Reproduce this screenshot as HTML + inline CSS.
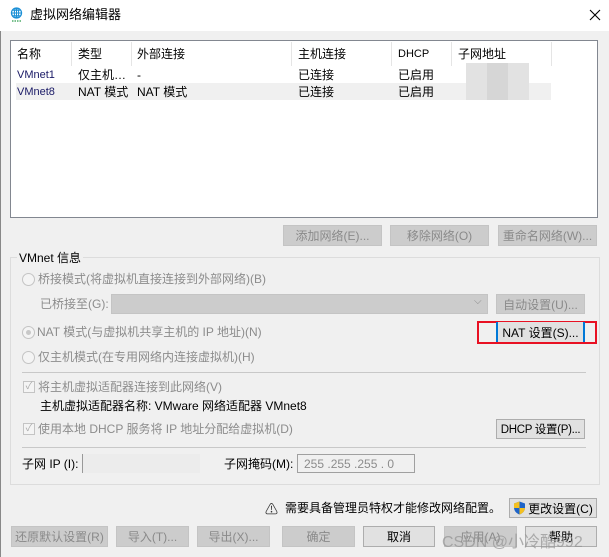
<!DOCTYPE html>
<html><head><meta charset="utf-8"><style>
*{margin:0;padding:0;box-sizing:border-box}
body{width:609px;height:557px;background:#f0f0f0;font-family:"Liberation Sans","Noto Sans CJK SC",sans-serif;font-size:12px;color:#000;position:relative;overflow:hidden}
.a{position:absolute;white-space:nowrap}
.t{line-height:14px}
.g{color:#8c8c8c}
.btn{position:absolute;background:#cccccc;border:1px solid #c4c4c4;color:#8a8a8a;text-align:center;font-size:12px;display:flex;align-items:center;justify-content:center;white-space:nowrap;overflow:hidden}
.en{background:#e1e1e1;border:1px solid #adadad;color:#000}
.sep{position:absolute;width:1px;background:#e5e5e5}
.rad{position:absolute;width:13px;height:13px;border:1px solid #c4c4c4;border-radius:50%;background:#f4f4f4}
.chk{position:absolute;width:12px;height:12px;border:1px solid #c4c4c4;background:#f4f4f4;color:#aaa;font-size:10px;line-height:10px;text-align:center}
</style></head><body>
<div class="a" style="left:0;top:0;width:609px;height:31px;background:#fff"></div>
<svg class="a" style="left:10px;top:7px" width="13" height="15" viewBox="0 0 13 15"><circle cx="6.5" cy="6" r="5" fill="none" stroke="#1a8fd6" stroke-width="1.3"/><path d="M1.5 6h10M6.5 1v10M3 3.3h7M3 8.7h7" stroke="#1a8fd6" stroke-width="1"/><ellipse cx="6.5" cy="6" rx="2.2" ry="5" fill="none" stroke="#1a8fd6"/><path d="M2 14h9" stroke="#2a9a4a" stroke-width="1.3" stroke-dasharray="1.5 1"/></svg>
<div class="a t" style="left:30px;top:8px;font-size:13px">虚拟网络编辑器</div>
<svg class="a" style="left:589px;top:9px" width="12" height="12" viewBox="0 0 12 12"><path d="M1 1L11 11M11 1L1 11" stroke="#000" stroke-width="1.1"/></svg>
<div class="a" style="left:0;top:31px;width:1px;height:526px;background:#888"></div>

<div class="a" style="left:10px;top:40px;width:588px;height:178px;background:#fff;border:1px solid #828790"></div>
<div class="sep" style="left:71px;top:42px;height:24px"></div>
<div class="sep" style="left:131px;top:42px;height:24px"></div>
<div class="sep" style="left:291px;top:42px;height:24px"></div>
<div class="sep" style="left:391px;top:42px;height:24px"></div>
<div class="sep" style="left:451px;top:42px;height:24px"></div>
<div class="sep" style="left:551px;top:42px;height:24px"></div>
<div class="a t" style="left:17px;top:47px">名称</div>
<div class="a t" style="left:78px;top:47px">类型</div>
<div class="a t" style="left:137px;top:47px">外部连接</div>
<div class="a t" style="left:298px;top:47px">主机连接</div>
<div class="a t" style="left:398px;top:47px;font-size:11px">DHCP</div>
<div class="a t" style="left:458px;top:47px">子网地址</div>
<div class="a" style="left:16px;top:83px;width:535px;height:17px;background:#f0f0f0"></div>
<div class="a" style="left:466px;top:63px;width:63px;height:37px;background:#e2e2e2"></div>
<div class="a" style="left:487px;top:63px;width:21px;height:37px;background:#d6d6d6"></div>
<div class="a t" style="left:17px;top:68px;color:#1a1a66;font-size:11px">VMnet1</div>
<div class="a t" style="left:78px;top:68px">仅主机…</div>
<div class="a t" style="left:137px;top:68px">-</div>
<div class="a t" style="left:298px;top:68px">已连接</div>
<div class="a t" style="left:398px;top:68px">已启用</div>
<div class="a t" style="left:17px;top:85px;color:#1a1a66;font-size:11px">VMnet8</div>
<div class="a t" style="left:78px;top:85px">NAT 模式</div>
<div class="a t" style="left:137px;top:85px">NAT 模式</div>
<div class="a t" style="left:298px;top:85px">已连接</div>
<div class="a t" style="left:398px;top:85px">已启用</div>

<div class="btn" style="left:283px;top:225px;width:99px;height:21px">添加网络(E)...</div>
<div class="btn" style="left:390px;top:225px;width:99px;height:21px">移除网络(O)</div>
<div class="btn" style="left:498px;top:225px;width:99px;height:21px">重命名网络(W)...</div>

<div class="a" style="left:10px;top:257px;width:590px;height:228px;border:1px solid #dcdcdc"></div>
<div class="a t" style="left:17px;top:251px;background:#f0f0f0;padding:0 2px">VMnet 信息</div>
<div class="rad" style="left:22px;top:273px"></div>
<div class="a t g" style="left:38px;top:272px">桥接模式(将虚拟机直接连接到外部网络)(B)</div>
<div class="a t g" style="left:40px;top:297px">已桥接至(G):</div>
<div class="a" style="left:111px;top:294px;width:377px;height:20px;background:#cccccc;border:1px solid #c4c4c4"></div>
<div class="a g" style="left:474px;top:296px;font-size:10px">⌵</div>
<div class="btn" style="left:496px;top:294px;width:89px;height:20px">自动设置(U)...</div>
<div class="rad" style="left:22px;top:326px"></div>
<div class="a" style="left:26px;top:330px;width:5px;height:5px;border-radius:50%;background:#c8c8c8"></div>
<div class="a t g" style="left:37px;top:325px">NAT 模式(与虚拟机共享主机的 IP 地址)(N)</div>
<div class="a" style="left:477px;top:321px;width:120px;height:23px;border:2px solid #e81123"></div>
<div class="btn en" style="left:496px;top:322px;width:89px;height:20px;border-left:2px solid #0078d7;border-right:2px solid #0078d7;border-top:0;border-bottom:0">NAT 设置(S)...</div>
<div class="rad" style="left:22px;top:351px"></div>
<div class="a t g" style="left:38px;top:350px">仅主机模式(在专用网络内连接虚拟机)(H)</div>
<div class="a" style="left:22px;top:372px;width:564px;height:1px;background:#c8c8c8"></div>
<div class="chk" style="left:23px;top:381px">✓</div>
<div class="a t g" style="left:38px;top:380px">将主机虚拟适配器连接到此网络(V)</div>
<div class="a t" style="left:40px;top:399px">主机虚拟适配器名称: VMware 网络适配器 VMnet8</div>
<div class="chk" style="left:23px;top:423px">✓</div>
<div class="a t g" style="left:38px;top:422px">使用本地 DHCP 服务将 IP 地址分配给虚拟机(D)</div>
<div class="btn en" style="left:496px;top:419px;width:89px;height:20px;font-size:11.5px;letter-spacing:-0.3px">DHCP 设置(P)...</div>
<div class="a" style="left:22px;top:447px;width:564px;height:1px;background:#c8c8c8"></div>
<div class="a t" style="left:22px;top:457px">子网 IP (I):</div>
<div class="a" style="left:82px;top:454px;width:118px;height:19px;background:#ececec;border-left:1px solid #999"></div>
<div class="a t" style="left:224px;top:457px">子网掩码(M):</div>
<div class="a" style="left:297px;top:454px;width:118px;height:19px;background:#f0f0f0;border:1px solid #a0a0a0"></div>
<div class="a t g" style="left:304px;top:457px">255 .255 .255 .  0</div>

<div class="a" style="left:265px;top:499px;font-size:13px;color:#333">⚠</div>
<div class="a t" style="left:285px;top:501px">需要具备管理员特权才能修改网络配置。</div>
<div class="btn en" style="left:509px;top:498px;width:88px;height:20px"><svg width="13" height="14" viewBox="0 0 13 14" style="margin-right:2px"><path d="M6.5 0.5L1 2.5v4c0 3.5 2.5 6 5.5 7 3-1 5.5-3.5 5.5-7v-4z" fill="#1e64c8"/><path d="M6.5 0.5v6.5H1v-4.5zM6.5 7h5.5c-.2 3.2-2.6 5.6-5.5 6.5z" fill="#f4c020"/></svg>更改设置(C)</div>

<div class="btn" style="left:11px;top:526px;width:97px;height:21px">还原默认设置(R)</div>
<div class="btn" style="left:116px;top:526px;width:73px;height:21px">导入(T)...</div>
<div class="btn" style="left:197px;top:526px;width:73px;height:21px">导出(X)...</div>
<div class="btn" style="left:282px;top:526px;width:73px;height:21px">确定</div>
<div class="btn en" style="left:363px;top:526px;width:72px;height:21px">取消</div>
<div class="btn" style="left:444px;top:526px;width:73px;height:21px">应用(A)</div>
<div class="btn en" style="left:525px;top:526px;width:72px;height:21px">帮助</div>
<div class="a" style="left:442px;top:528px;font-size:16px;color:rgba(150,150,150,.75)">CSDN @小冷酷992</div>
</body></html>
